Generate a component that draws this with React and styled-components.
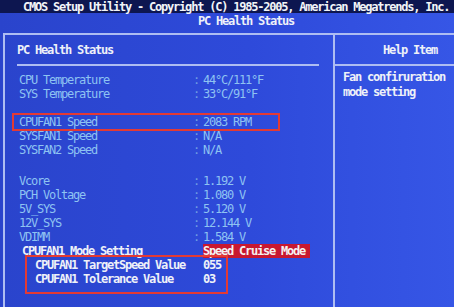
import React from 'react';
import styled, { createGlobalStyle } from 'styled-components';

const Global = createGlobalStyle`
  html, body {
    margin: 0;
    padding: 0;
    background: #2c46d4;
  }
  body {
    width: 454px;
    height: 307px;
    overflow: hidden;
    font-family: "DejaVu Sans Mono", "Liberation Mono", monospace;
    font-size: 12px;
    letter-spacing: -1.22px;
  }
`;

const Screen = styled.div`
  width: 454px;
  height: 307px;
  overflow: hidden;
  background: linear-gradient(90deg, #2a44cc 0%, #2e4ada 55%, #3656e6 100%);
`;

const TopBar = styled.div`
  height: 13px;
  line-height: 14px;
  padding-left: 23px;
  background: #0d1650;
  color: #f2f4f8;
  font-weight: bold;
  white-space: nowrap;
`;

const SubTitle = styled.div`
  height: 13px;
  line-height: 16px;
  padding-left: 38px;
  text-align: center;
  color: #eef1f8;
  font-weight: bold;
`;

const Frame = styled.div`
  display: flex;
  margin: 7px 0 0 3px;
  width: 480px;
  height: 280px;
  border-top: 2px solid #aebdf2;
  border-left: 2px solid #aebdf2;
`;

const LeftPanel = styled.div`
  width: 328px;
  flex-shrink: 0;
  padding: 8px 14px 0 12px;
  box-sizing: border-box;
`;

const RightPanel = styled.div`
  flex: 1;
  padding-top: 8px;
  border-left: 2px solid #aebdf2;
`;

const PanelTitle = styled.div`
  height: 14px;
  line-height: 14px;
  padding-bottom: 7px;
  border-bottom: 2px solid #aebdf2;
  color: #eef1f8;
  font-weight: bold;
  text-align: ${p => (p.$center ? 'center' : 'left')};
`;

const Rows = styled.div`
  margin-top: 7px;
  display: flex;
  flex-direction: column;
`;

const Spacer = styled.div`
  height: ${p => p.$h}px;
`;

const Row = styled.div`
  position: relative;
  display: grid;
  grid-template-columns: ${p => 174 - p.$indent}px 10px auto;
  height: 14px;
  line-height: 14px;
  padding-left: ${p => 2 + p.$indent}px;
  white-space: nowrap;
  color: ${p => (p.$white ? '#eef1f8' : '#8ec3f2')};
  font-weight: ${p => (p.$white ? 'bold' : 'normal')};

  ${p =>
    p.$marked &&
    `
    &::after {
      content: '';
      position: absolute;
      left: -5px;
      top: -2px;
      width: 268px;
      height: 18px;
      box-sizing: border-box;
      border: 2px solid #e33a34;
    }
  `}
`;

const Colon = styled.span`
  color: #6f9ee2;
`;

const Value = styled.span`
  justify-self: start;
  ${p =>
    p.$selected &&
    `
    background: #c81830;
    color: #f4f0f0;
    font-weight: bold;
    padding-right: 5px;
  `}
`;

const SubGroup = styled.div`
  position: relative;

  &::after {
    content: '';
    position: absolute;
    left: 8px;
    top: -3px;
    width: 203px;
    height: 39px;
    box-sizing: border-box;
    border: 2px solid #e33a34;
  }
`;

const HelpText = styled.div`
  margin-top: 4px;
  padding-left: 8px;
  line-height: 15px;
  color: #eef1f8;
  font-weight: bold;
  white-space: pre;
`;

const Item = ({ label, value, colon = true, indent = 0, white, selected, marked }) => (
  <Row $indent={indent} $white={white} $marked={marked}>
    <span>{label}</span>
    <Colon>{colon ? ':' : ''}</Colon>
    <Value $selected={selected}>{value}</Value>
  </Row>
);

export default function App() {
  return (
    <Screen>
      <Global />
      <TopBar>CMOS Setup Utility - Copyright (C) 1985-2005, American Megatrends, Inc.</TopBar>
      <SubTitle>PC Health Status</SubTitle>
      <Frame>
        <LeftPanel>
          <PanelTitle>PC Health Status</PanelTitle>
          <Rows>
            <Item label="CPU Temperature" value="44°C/111°F" />
            <Item label="SYS Temperature" value="33°C/91°F" />
            <Spacer $h={14} />
            <Item label="CPUFAN1 Speed" value="2083 RPM" marked />
            <Item label="SYSFAN1 Speed" value="N/A" />
            <Item label="SYSFAN2 Speed" value="N/A" />
            <Spacer $h={17} />
            <Item label="Vcore" value="1.192 V" />
            <Item label="PCH Voltage" value="1.080 V" />
            <Item label="5V_SYS" value="5.120 V" />
            <Item label="12V_SYS" value="12.144 V" />
            <Item label="VDIMM" value="1.584 V" />
            <Item label="CPUFAN1 Mode Setting" value="Speed Cruise Mode" colon={false} indent={3} white selected />
            <SubGroup>
              <Item label="CPUFAN1 TargetSpeed Value" value="055" colon={false} indent={16} white />
              <Item label="CPUFAN1 Tolerance Value" value="03" colon={false} indent={16} white />
            </SubGroup>
          </Rows>
        </LeftPanel>
        <RightPanel>
          <PanelTitle $center>Help Item</PanelTitle>
          <HelpText>{'Fan confiruration\nmode setting'}</HelpText>
        </RightPanel>
      </Frame>
    </Screen>
  );
}
